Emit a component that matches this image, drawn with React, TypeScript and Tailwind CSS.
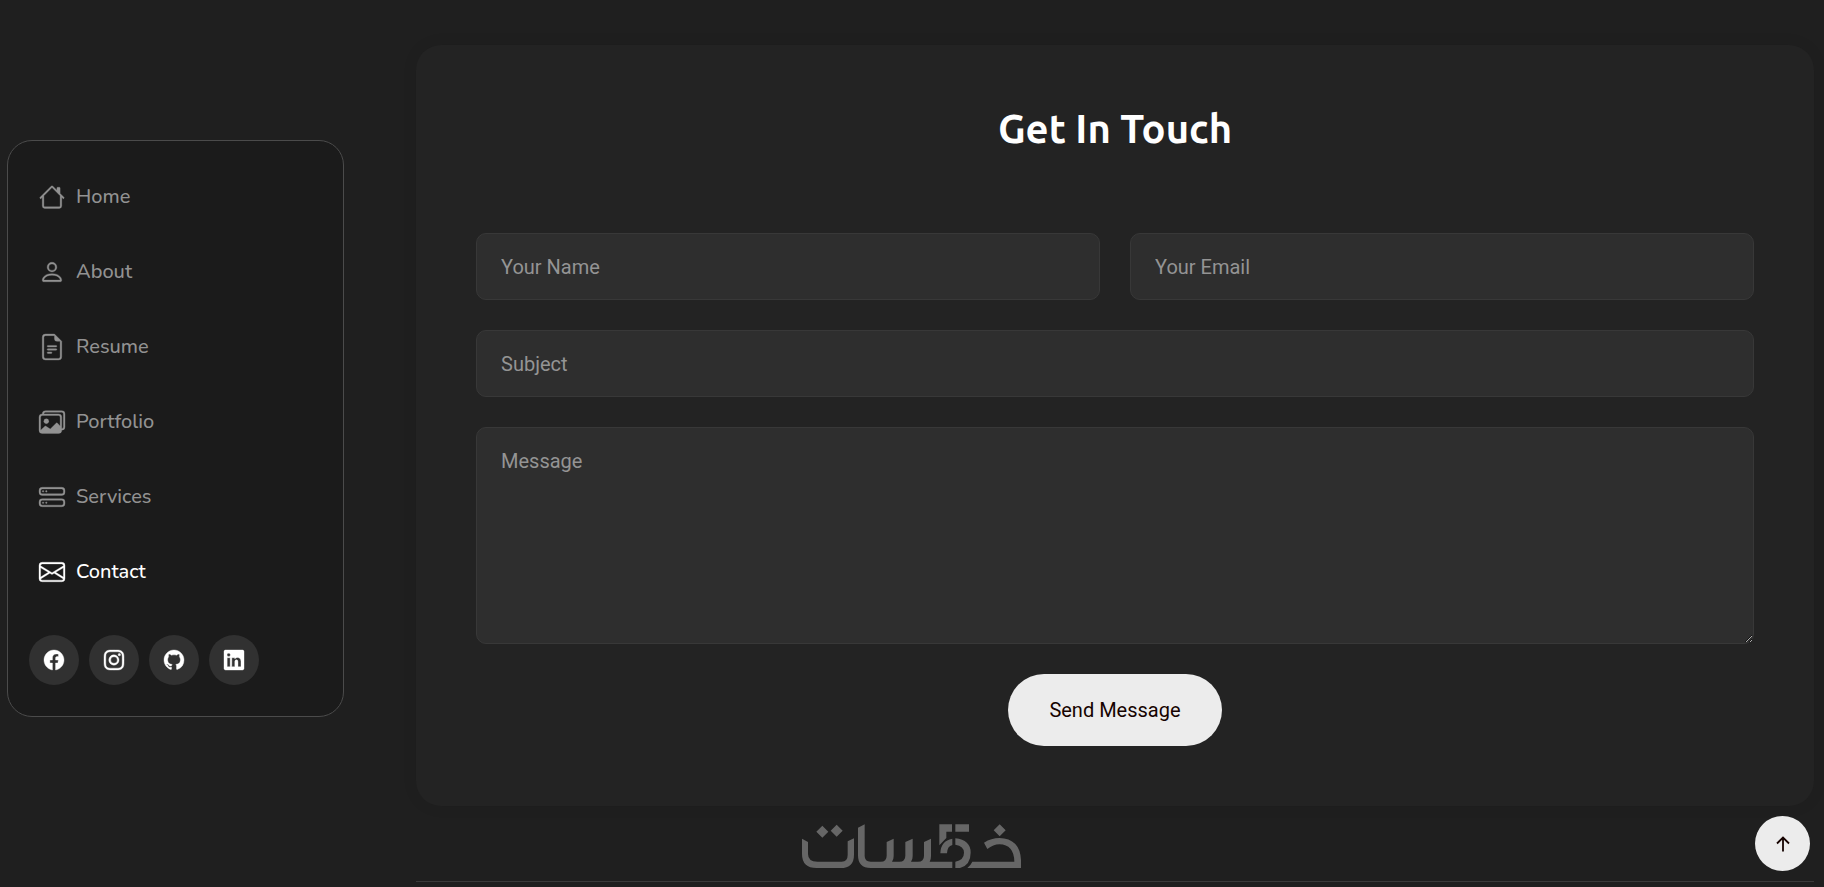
import type { IconType } from 'react-icons';
import {
  BsHouse,
  BsPerson,
  BsFileEarmarkText,
  BsImages,
  BsHddStack,
  BsEnvelope,
  BsFacebook,
  BsInstagram,
  BsGithub,
  BsLinkedin,
} from 'react-icons/bs';

type NavItem = { label: string; href: string; icon: IconType; active?: boolean };
type SocialItem = { label: string; href: string; icon: IconType };

const navItems: NavItem[] = [
  { label: 'Home', href: '#home', icon: BsHouse },
  { label: 'About', href: '#about', icon: BsPerson },
  { label: 'Resume', href: '#resume', icon: BsFileEarmarkText },
  { label: 'Portfolio', href: '#portfolio', icon: BsImages },
  { label: 'Services', href: '#services', icon: BsHddStack },
  { label: 'Contact', href: '#contact', icon: BsEnvelope, active: true },
];

const socialItems: SocialItem[] = [
  { label: 'Facebook', href: '#facebook', icon: BsFacebook },
  { label: 'Instagram', href: '#instagram', icon: BsInstagram },
  { label: 'GitHub', href: '#github', icon: BsGithub },
  { label: 'LinkedIn', href: '#linkedin', icon: BsLinkedin },
];

const fieldClass =
  'block w-full rounded-[10px] border border-[#383838] bg-[#2e2e2e] px-6 text-[20px] leading-[30px] text-white outline-none placeholder:text-[#949494] placeholder:opacity-100 focus:border-[#666]';

function Sidebar() {
  return (
    <aside className="mt-[140px] w-[337px] shrink-0 self-start rounded-[25px] border border-[#4b4b4b] bg-[#1b1b1b] pt-[18px] pb-[31px]">
      <nav aria-label="Main">
        <ul>
          {navItems.map(({ label, href, icon: Icon, active }) => (
            <li key={label}>
              <a
                href={href}
                aria-current={active ? 'page' : undefined}
                className={`flex h-[75px] items-center gap-[11px] pl-[31px] font-['Nunito','Lato',sans-serif] text-[20px] font-medium ${
                  active ? 'text-white' : 'text-[#929292]'
                }`}
              >
                <Icon className="size-[26px] overflow-visible stroke-[0.2]" aria-hidden="true" />
                {label}
              </a>
            </li>
          ))}
        </ul>
      </nav>
      <ul className="mt-[26px] flex gap-2.5 pl-[21px]">
        {socialItems.map(({ label, href, icon: Icon }) => (
          <li key={label}>
            <a
              href={href}
              aria-label={label}
              className="flex size-[50px] items-center justify-center rounded-full bg-[#313131] text-white"
            >
              <Icon className="size-5 overflow-visible stroke-[0.3]" aria-hidden="true" />
            </a>
          </li>
        ))}
      </ul>
    </aside>
  );
}

function ContactCard() {
  return (
    <section className="rounded-[25px] bg-[#232323] p-[60px] shadow-[0_0_15px_rgba(0,0,0,0.08)]">
      <h2 className="text-center font-['Ubuntu','Open_Sans',sans-serif] text-[40px] leading-[48px] font-semibold text-white">
        Get In Touch
      </h2>
      <form className="mt-20 grid grid-cols-2 gap-[30px]" onSubmit={(e) => e.preventDefault()}>
        <input className={`${fieldClass} h-[67px]`} type="text" aria-label="Your Name" placeholder="Your Name" />
        <input className={`${fieldClass} h-[67px]`} type="email" aria-label="Your Email" placeholder="Your Email" />
        <input
          className={`${fieldClass} col-span-2 h-[67px]`}
          type="text"
          aria-label="Subject"
          placeholder="Subject"
        />
        <textarea
          className={`${fieldClass} col-span-2 h-[217px] resize py-[18px]`}
          aria-label="Message"
          placeholder="Message"
        />
        <div className="col-span-2 flex justify-center">
          <button
            type="submit"
            className="h-[72px] rounded-full bg-[#ececec] px-[41px] text-[20px] leading-[30px] text-[#160300]"
          >
            Send Message
          </button>
        </div>
      </form>
    </section>
  );
}

function KhamsatLogo() {
  return (
    <svg viewBox="66 42 657 132" className="h-11 w-[219px]" fill="#666666" role="img" aria-label="خمسات">
      <path d="M66 86 84 96V132Q84 155 112 155H185Q203 155 203 135V94L222 85V134Q222 174 182 174H110Q66 174 66 132Z" />
      <path d="M234 53 254 43V138Q254 155 272 155H302Q320 155 320 137V96L341 86V138Q341 150 336 155H358Q376 155 376 137V96L398 86V138Q398 150 393 155H414Q432 155 432 137V96L453 86V138Q453 150 449 155H517V174H272Q234 174 234 136Z" />
      <path d="M127 47 145 65 127 83 109 65ZM170 44 188 62 170 80 152 62ZM659 43 677 61 659 79 641 61Z" />
      <path d="M478 43H516V65H499V84L478 106ZM526 43H567V65H526Z" />
      <path d="M517 86V105Q502 108 501 130H481Q482 92 517 86Z" />
      <path d="M526 85Q572 90 572 128Q572 165 540 174H526V155Q552 150 552 128Q552 108 526 104Z" />
      <path d="M612 98Q634 84 658 84Q720 86 723 150V174H562Q572 166 577 155H703Q702 104 658 103Q640 103 622 117Z" />
    </svg>
  );
}

export default function App() {
  return (
    <div className="min-h-screen bg-[#1f1f1f] font-['Roboto',sans-serif] text-white">
      <div className="flex gap-[72px] pr-2.5 pl-[7px]">
        <Sidebar />
        <main className="min-w-0 flex-1 pt-[45px]">
          <ContactCard />
          <hr className="mt-[75px] border-[#3a3a3a]" />
        </main>
      </div>

      <div className="pointer-events-none fixed inset-x-0 bottom-[19px] flex justify-center pr-0.5">
        <KhamsatLogo />
      </div>

      <button
        type="button"
        aria-label="Back to top"
        className="fixed right-3.5 bottom-4 flex size-[55px] items-center justify-center rounded-full bg-[#ececec] text-[#160300]"
      >
        <svg viewBox="0 0 14 16" className="h-4 w-3.5" fill="none" stroke="currentColor" strokeWidth="1.8" aria-hidden="true">
          <path d="M7 15.5V1.6M1 7.5 7 1.5l6 6" />
        </svg>
      </button>
    </div>
  );
}
